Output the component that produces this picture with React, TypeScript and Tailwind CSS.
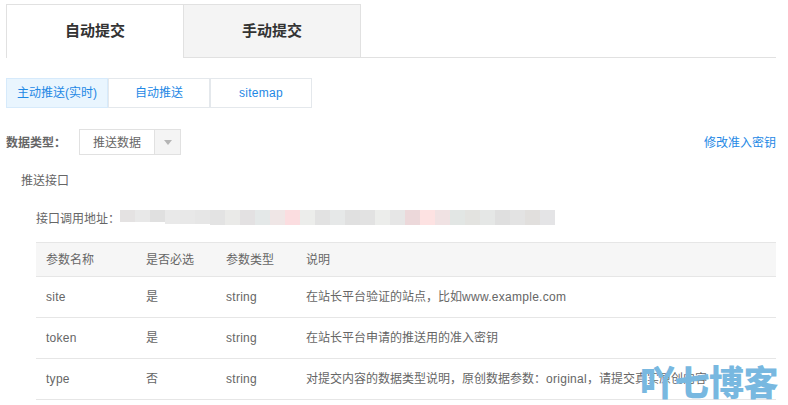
const font = { fontFamily: '"Liberation Sans", "Noto Sans CJK SC", sans-serif' };

const strip = [
  'h-[12px] bg-[#e4e2e2]', 'h-[12px] bg-[#e8e8e8]', 'h-[12px] bg-[#e0e0e0]', 'h-[14px] bg-[#e9e9e9]', 'h-[14px] bg-[#e8e8e8]', 'h-[14px] bg-[#e6e6e6]',
  'h-[15px] bg-[#e3e3e3]', 'h-[15px] bg-[#eaeae8]', 'h-[15px] bg-[#e3e1e2]', 'h-[15px] bg-[#e4e8e8]', 'h-[15px] bg-[#efe6e6]', 'h-[15px] bg-[#fbdde0]',
  'h-[15px] bg-[#ecedeb]', 'h-[15px] bg-[#e2e2e2]', 'h-[15px] bg-[#e6e8e8]', 'h-[15px] bg-[#e0e0e0]', 'h-[15px] bg-[#e2e2e2]', 'h-[15px] bg-[#ecedeb]',
  'h-[15px] bg-[#e6e6e6]', 'h-[15px] bg-[#ecd8da]', 'h-[15px] bg-[#fde2e2]', 'h-[15px] bg-[#f0e2e3]', 'h-[15px] bg-[#e2e6e4]', 'h-[15px] bg-[#e3e3e0]',
  'h-[15px] bg-[#e5e7e6]', 'h-[15px] bg-[#dfdfdf]', 'h-[15px] bg-[#e3e3e3]', 'h-[15px] bg-[#e1dfdd]', 'h-[15px] bg-[#e4e4e6]',
];

const Latin = ({ children }: { children: string }) => <span className="tracking-[0.28px]">{children}</span>;

const rows = [
  { name: 'site', required: '是', type: 'string', desc: <>在站长平台验证的站点，比如<Latin>www.example.com</Latin></> },
  { name: 'token', required: '是', type: 'string', desc: <>在站长平台申请的推送用的准入密钥</> },
  { name: 'type', required: '否', type: 'string', desc: <>对提交内容的数据类型说明，原创数据参数：<Latin>original</Latin>，请提交真实原创内容</> },
];

export default function App() {
  return (
    <div className="relative h-[405px] w-[788px] overflow-hidden bg-white pl-[6px] pr-[12px] pt-[4px] text-[12px] text-[#666]" style={font}>
      <div className="flex h-[54px] border-b border-[#e1e1e1]">
        <div className="-mb-px flex w-[178px] items-center justify-center border-l border-r border-t border-[#e1e1e1] bg-white text-[15px] font-bold text-[#333]">自动提交</div>
        <div className="flex w-[177px] items-center justify-center border-r border-t border-[#e1e1e1] bg-[#f4f4f4] text-[15px] font-bold text-[#333]">手动提交</div>
      </div>

      <div className="mt-[20px] flex h-[30px] w-[306px] text-[#1e88e5]">
        <div className="flex w-[102px] items-center justify-center border border-[#d6eafb] bg-[#e9f5fe]">主动推送(实时)</div>
        <div className="flex w-[102px] items-center justify-center border border-[#e4e8ec]">自动推送</div>
        <div className="flex w-[102px] items-center justify-center border border-[#e4e8ec] tracking-[0.3px]">sitemap</div>
      </div>

      <div className="mt-[21px] flex h-[26px] items-center">
        <span className="w-[73px] pt-px font-bold">数据类型：</span>
        <div className="flex h-[26px] w-[102px] border border-[#e1e1e1]">
          <span className="flex w-[75px] items-center justify-center border-r border-[#e1e1e1] pt-px">推送数据</span>
          <span className="flex flex-1 items-center justify-center bg-[#f4f4f4]">
            <span className="h-0 w-0 border-x-[4px] border-t-[5px] border-x-transparent border-t-[#b5b5b5]" />
          </span>
        </div>
        <a className="ml-auto pt-px text-[#1e88e5]">修改准入密钥</a>
      </div>

      <div className="ml-[15px] mt-[18px] leading-[16px]">推送接口</div>

      <div className="ml-[30px] mt-[21px] flex h-[15px] items-center">
        <span className="w-[84px] shrink-0 pt-[2px]">接口调用地址：</span>
        <div className="flex h-[15px] items-start">
          {strip.map((cell, i) => (
            <span key={i} className={`w-[15px] ${cell}`} />
          ))}
        </div>
      </div>

      <table className="ml-[30px] mt-[17px] w-[740px] table-fixed border-collapse">
        <thead>
          <tr className="h-[34px] border-y border-[#e6e6e6] bg-[#f6f6f6] text-left">
            <th className="w-[110px] pl-[10px] pt-px font-normal">参数名称</th>
            <th className="w-[80px] pt-px font-normal">是否必选</th>
            <th className="w-[80px] pt-px font-normal">参数类型</th>
            <th className="pt-px font-normal">说明</th>
          </tr>
        </thead>
        <tbody>
          {rows.map(row => (
            <tr key={row.name} className="h-[41px] border-b border-[#e6e6e6]">
              <td className="pl-[10px]"><Latin>{row.name}</Latin></td>
              <td>{row.required}</td>
              <td><Latin>{row.type}</Latin></td>
              <td>{row.desc}</td>
            </tr>
          ))}
        </tbody>
      </table>

      <div className="absolute left-[640px] top-[361px] text-[35px] font-black leading-[40px] tracking-[-0.5px] text-[#78b8e0]" style={{ fontFamily: '"Noto Sans CJK SC", sans-serif' }}>吖七博客</div>
    </div>
  );
}
